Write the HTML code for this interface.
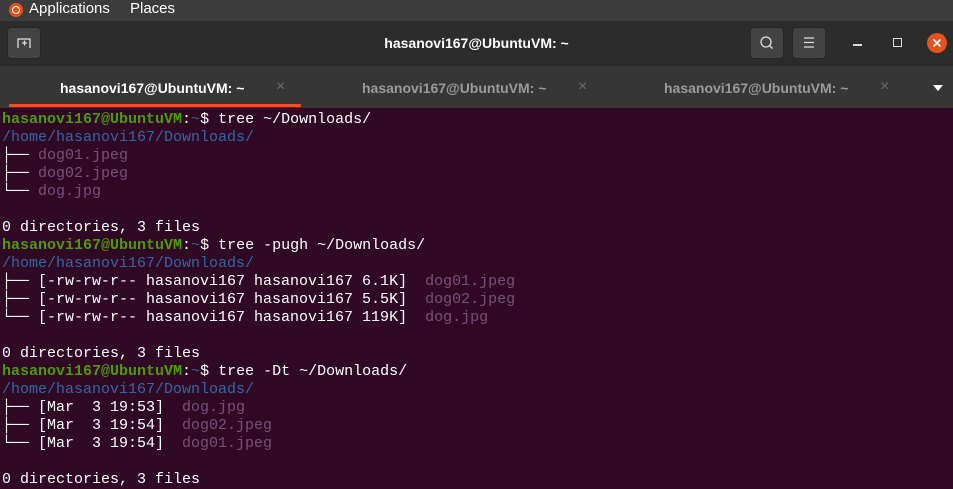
<!DOCTYPE html>
<html><head><meta charset="utf-8"><style>
body{margin:0;width:953px;height:489px;overflow:hidden;background:#300a24;font-family:"Liberation Sans",sans-serif;position:relative}
.top{position:absolute;left:0;top:0;width:953px;height:21px;background:#3c3c3c;color:#fff;font-size:15px}
.hdr{position:absolute;left:0;top:21px;width:953px;height:45px;background:#2c2c2c}
.tabs{position:absolute;left:0;top:66px;width:953px;height:42px;background:#363636}
.btn{position:absolute;top:27px;width:34px;height:32px;background:#434343;border-radius:4px;border:1px solid #262626;box-sizing:border-box}
.tab{position:absolute;top:80px;font-size:14px;font-weight:bold;color:#9a9a9a}
.x{position:absolute;top:78px;color:#6a6a6a;font-size:16px}
pre{position:absolute;left:2px;top:111px;margin:0;font-family:"Liberation Mono",monospace;font-size:15px;line-height:18px;color:#fff}
.g{color:#4e9a06;font-weight:bold}.b{color:#3465a4}.p{color:#75507b}
</style></head><body>
<div class="top">
<div style="position:absolute;left:9px;top:3px;width:14px;height:14px;border-radius:50%;background:#e2531e"></div>
<div style="position:absolute;left:12px;top:6px;width:8px;height:8px;border-radius:50%;border:1.5px solid #fff;box-sizing:border-box"></div>
<span style="position:absolute;left:29px;top:0">Applications</span>
<span style="position:absolute;left:130px;top:0">Places</span>
</div>
<div class="hdr"></div>
<div class="btn" style="left:7px"><svg width="32" height="30" viewBox="0 0 32 30"><path d="M10 20V11h12v9M14 15h5M16.5 12.5v5" stroke="#ddd" stroke-width="1.3" fill="none"/></svg></div>
<div style="position:absolute;left:0;width:953px;top:35px;text-align:center;color:#fff;font-weight:bold;font-size:14px">hasanovi167@UbuntuVM: ~</div>
<div class="btn" style="left:750px"><svg width="32" height="30" viewBox="0 0 32 30"><circle cx="15" cy="14" r="5" stroke="#ddd" stroke-width="1.3" fill="none"/><path d="M18.5 17.5l3 3" stroke="#ddd" stroke-width="1.3"/></svg></div>
<div class="btn" style="left:792px"><svg width="32" height="30" viewBox="0 0 32 30"><path d="M11 10h10M11 14.5h10M11 19h10" stroke="#ddd" stroke-width="1.2"/></svg></div>
<div style="position:absolute;left:853px;top:44px;width:9px;height:1.5px;background:#ddd"></div>
<div style="position:absolute;left:893px;top:38px;width:7px;height:7px;border:1.5px solid #ddd"></div>
<div style="position:absolute;left:927px;top:33px;width:20px;height:20px;border-radius:50%;background:#e2531e"><svg width="20" height="20" viewBox="0 0 20 20"><path d="M6.5 6.5l7 7M13.5 6.5l-7 7" stroke="#fff" stroke-width="1.6"/></svg></div>
<div class="tabs"></div>
<div class="tab" style="left:60px;color:#fff">hasanovi167@UbuntuVM: ~</div><div class="x" style="left:276px">×</div>
<div style="position:absolute;left:9px;top:104px;width:292px;height:3px;background:#e95420"></div>
<div class="tab" style="left:362px">hasanovi167@UbuntuVM: ~</div><div class="x" style="left:578px">×</div>
<div class="tab" style="left:664px">hasanovi167@UbuntuVM: ~</div><div class="x" style="left:880px">×</div>
<div style="position:absolute;left:933px;top:85px;border-left:5px solid transparent;border-right:5px solid transparent;border-top:6px solid #fff"></div>
<pre><span class="g">hasanovi167@UbuntuVM</span>:<span class="b">~</span>$ tree ~/Downloads/
<span class="b">/home/hasanovi167/Downloads/</span>
├── <span class="p">dog01.jpeg</span>
├── <span class="p">dog02.jpeg</span>
└── <span class="p">dog.jpg</span>

0 directories, 3 files
<span class="g">hasanovi167@UbuntuVM</span>:<span class="b">~</span>$ tree -pugh ~/Downloads/
<span class="b">/home/hasanovi167/Downloads/</span>
├── [-rw-rw-r-- hasanovi167 hasanovi167 6.1K]  <span class="p">dog01.jpeg</span>
├── [-rw-rw-r-- hasanovi167 hasanovi167 5.5K]  <span class="p">dog02.jpeg</span>
└── [-rw-rw-r-- hasanovi167 hasanovi167 119K]  <span class="p">dog.jpg</span>

0 directories, 3 files
<span class="g">hasanovi167@UbuntuVM</span>:<span class="b">~</span>$ tree -Dt ~/Downloads/
<span class="b">/home/hasanovi167/Downloads/</span>
├── [Mar  3 19:53]  <span class="p">dog.jpg</span>
├── [Mar  3 19:54]  <span class="p">dog02.jpeg</span>
└── [Mar  3 19:54]  <span class="p">dog01.jpeg</span>

0 directories, 3 files</pre>
</body></html>
